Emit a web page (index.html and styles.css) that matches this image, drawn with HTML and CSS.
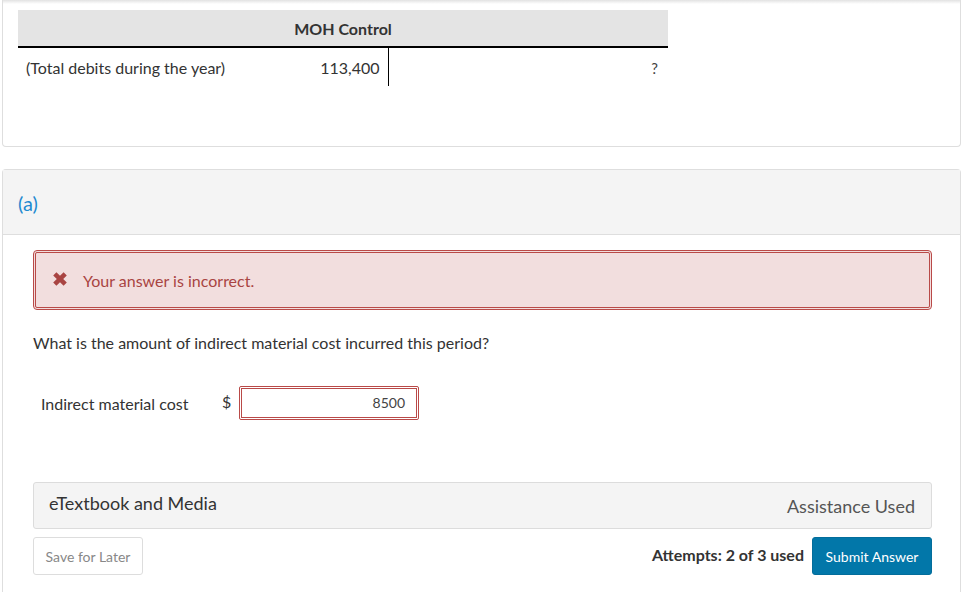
FILE: index.html
```html
<!DOCTYPE html>
<html>
<head>
<meta charset="utf-8">
<link rel="stylesheet" href="styles.css">
</head>
<body>
<div class="card card-top">
  <table class="taccount">
    <thead>
      <tr><th colspan="3">MOH Control</th></tr>
    </thead>
    <tbody>
      <tr>
        <td class="label">(Total debits during the year)</td>
        <td class="debit">113,400</td>
        <td class="credit"><span class="q">?</span></td>
      </tr>
    </tbody>
  </table>
</div>

<div class="card card-part">
  <div class="part-head"><span class="part-label">(a)</span></div>
  <div class="part-body">
    <div class="alert">
      <svg class="xicon" viewBox="0 0 16 16" width="16" height="16"><path d="M1.2 4.4 L4.4 1.2 L8 4.8 L11.6 1.2 L14.8 4.4 L11.2 8 L14.8 11.6 L11.6 14.8 L8 11.2 L4.4 14.8 L1.2 11.6 L4.8 8 Z" fill="#a94442"/></svg>
      <span>Your answer is incorrect.</span>
    </div>
    <p class="question">What is the amount of indirect material cost incurred this period?</p>
    <div class="answer-row">
      <span class="answer-label">Indirect material cost</span>
      <span class="dollar">$</span>
      <div class="input">8500</div>
    </div>
    <div class="media-bar">
      <span class="media-title">eTextbook and Media</span>
      <span class="assist">Assistance Used</span>
    </div>
    <div class="actions">
      <button class="btn-save">Save for Later</button>
      <div class="right-actions">
        <span class="attempts">Attempts: 2 of 3 used</span>
        <button class="btn-submit">Submit Answer</button>
      </div>
    </div>
  </div>
</div>
</body>
</html>
```

FILE: styles.css
```css
* { box-sizing: border-box; }
html, body { margin: 0; padding: 0; background: #fff; }
body {
  font-family: Lato, "Open Sans", Arial, sans-serif;
  color: #333;
  padding: 0 1px 0 2px;
  width: 962px;
  height: 592px;
  overflow: hidden;
  font-size: 16px;
}

.card {
  border: 1px solid #dedede;
  background: #fff;
}

.card-top {
  border-top: none;
  border-radius: 0 0 4px 4px;
  height: 147px;
  padding: 10px 0 0 15px;
  background: linear-gradient(#e2e2e2, #fff 4px);
}

.taccount {
  border-collapse: collapse;
  width: 650px;
  font-size: 16px;
}
.taccount th {
  background: #e4e4e4;
  height: 37px;
  font-weight: 700;
  font-size: 16px;
  text-align: center;
  border-bottom: 2px solid #000;
  padding: 0;
  color: #333;
}
.taccount td {
  height: 39px;
  padding: 0;
  vertical-align: middle;
}
.taccount .label { width: 210px; padding-left: 8px; }
.taccount .debit {
  width: 160px;
  text-align: right;
  padding-right: 8px;
  border-right: 1px solid #000;
}
.taccount .credit { text-align: right; padding-right: 10px; }
.q { font-size: 15px; color: #444; }

.card-part {
  margin-top: 22px;
  border-bottom: none;
  border-radius: 4px 4px 0 0;
  height: 430px;
}
.part-head {
  background: #f4f4f4;
  height: 65px;
  border-bottom: 1px solid #dedede;
  display: flex;
  align-items: center;
  padding: 0 0 0 15px;
}
.part-label {
  color: #1f8ad0;
  font-size: 20px;
  margin-top: 2px;
}

.part-body {
  padding: 15px 28px 0 30px;
}

.alert {
  height: 60px;
  border: 3px double #b94a48;
  border-radius: 4px;
  background: #f2dede;
  color: #a94442;
  display: flex;
  align-items: center;
  padding-left: 16px;
  font-size: 16px;
}
.xicon { margin-right: 15px; margin-top: -2px; }

.question {
  margin: 23px 0 0 0;
  font-size: 16px;
  line-height: 20px;
}

.answer-row {
  display: flex;
  align-items: center;
  height: 34px;
  margin-top: 33px;
  padding-left: 8px;
  font-size: 16px;
}
.answer-label { width: 181px; }
.dollar { width: 17px; margin-top: -3px; }
.input {
  width: 180px;
  height: 34px;
  border: 3px double #b94a48;
  border-radius: 2px;
  text-align: right;
  font-size: 14px;
  line-height: 28px;
  padding-right: 11px;
  color: #444;
  background: #fff;
}

.media-bar {
  margin-top: 62px;
  height: 47px;
  background: #f4f4f4;
  border: 1px solid #dcdcdc;
  border-radius: 3px;
  display: flex;
  justify-content: space-between;
  align-items: center;
  padding: 0 16px 0 15px;
  font-size: 18px;
}
.media-title { color: #333; margin-top: -5px; }
.assist { color: #555; }

.actions {
  margin-top: 8px;
  display: flex;
  justify-content: space-between;
  align-items: center;
}
.btn-save {
  width: 110px;
  height: 38px;
  background: #fff;
  border: 1px solid #ddd;
  border-radius: 3px;
  color: #888;
  font-family: inherit;
  font-size: 14px;
  padding: 0;
}
.right-actions {
  display: flex;
  align-items: center;
  gap: 8px;
}
.attempts {
  font-weight: 700;
  font-size: 16px;
  margin-top: -3px;
}
.btn-submit {
  width: 120px;
  height: 38px;
  background: #0277a9;
  border: 1px solid #036d9b;
  border-radius: 3px;
  color: #fff;
  font-family: inherit;
  font-size: 14px;
  padding: 0;
}
```
